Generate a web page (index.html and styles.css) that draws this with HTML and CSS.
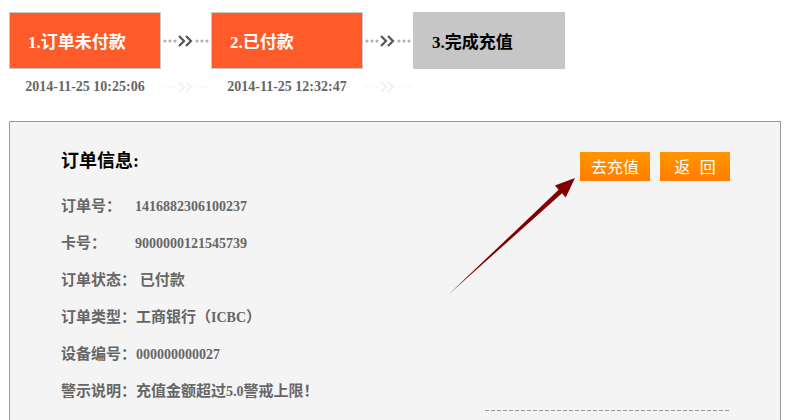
FILE: index.html
```html
<!DOCTYPE html>
<html lang="zh-CN">
<head>
    <meta charset="UTF-8">
    <title>订单详情</title>
    <link rel="stylesheet" href="styles.css">
</head>
<body>
    <div class="steps">
        <div class="step done">1.订单未付款</div>
        <div class="link">
            <svg width="50" height="20" viewBox="0 0 50 20">
                <circle cx="4" cy="10" r="1.6"/><circle cx="9" cy="10" r="1.6"/><circle cx="14" cy="10" r="1.6"/>
                <polyline points="18,5 23,10 18,15"/><polyline points="25,5 30,10 25,15"/>
                <circle cx="36" cy="10" r="1.6"/><circle cx="41" cy="10" r="1.6"/><circle cx="46" cy="10" r="1.6"/>
            </svg>
        </div>
        <div class="step done">2.已付款</div>
        <div class="link">
            <svg width="50" height="20" viewBox="0 0 50 20">
                <circle cx="4" cy="10" r="1.6"/><circle cx="9" cy="10" r="1.6"/><circle cx="14" cy="10" r="1.6"/>
                <polyline points="18,5 23,10 18,15"/><polyline points="25,5 30,10 25,15"/>
                <circle cx="36" cy="10" r="1.6"/><circle cx="41" cy="10" r="1.6"/><circle cx="46" cy="10" r="1.6"/>
            </svg>
        </div>
        <div class="step todo">3.完成充值</div>

        <div class="time">2014-11-25 10:25:06</div>
        <div class="link faded">
            <svg width="50" height="20" viewBox="0 0 50 20">
                <circle cx="4" cy="10" r="1.6"/><circle cx="9" cy="10" r="1.6"/><circle cx="14" cy="10" r="1.6"/>
                <polyline points="18,5 23,10 18,15"/><polyline points="25,5 30,10 25,15"/>
                <circle cx="36" cy="10" r="1.6"/><circle cx="41" cy="10" r="1.6"/><circle cx="46" cy="10" r="1.6"/>
            </svg>
        </div>
        <div class="time">2014-11-25 12:32:47</div>
        <div class="link faded">
            <svg width="50" height="20" viewBox="0 0 50 20">
                <circle cx="4" cy="10" r="1.6"/><circle cx="9" cy="10" r="1.6"/><circle cx="14" cy="10" r="1.6"/>
                <polyline points="18,5 23,10 18,15"/><polyline points="25,5 30,10 25,15"/>
                <circle cx="36" cy="10" r="1.6"/><circle cx="41" cy="10" r="1.6"/><circle cx="46" cy="10" r="1.6"/>
            </svg>
        </div>
        <div class="time"></div>
    </div>

    <div class="panel">
        <div class="panel-head">
            <h3>订单信息:</h3>
            <div class="actions">
                <a class="btn" href="#">去充值</a>
                <a class="btn back" href="#">返 回</a>
            </div>
        </div>

        <ul class="info">
            <li><span class="label">订单号：</span><span class="num">1416882306100237</span></li>
            <li><span class="label">卡号：</span><span class="num">9000000121545739</span></li>
            <li>订单状态： 已付款</li>
            <li>订单类型：工商银行（<span class="num">ICBC</span>）</li>
            <li>设备编号：<span class="num">000000000027</span></li>
            <li>警示说明：充值金额超过<span class="num">5.0</span>警戒上限！</li>
        </ul>

        <div class="dash"></div>

        <svg class="pointer" width="140" height="130" viewBox="0 0 140 130">
            <polygon points="2,123 116,21.3 119.7,25.4 129,6 108.9,13.6 112.6,17.7"/>
        </svg>
    </div>
</body>
</html>
```

FILE: styles.css
```css
body {
    margin: 0;
    padding: 12px 0 0 9px;
    background: #fff;
    font-family: "Liberation Serif", "Noto Sans CJK SC", serif;
    color: #666;
}

.steps {
    display: grid;
    grid-template-columns: 152px 50px 152px 50px 152px;
    grid-template-rows: 57px 20px;
    row-gap: 8px;
}
.step {
    box-sizing: border-box;
    padding-left: 18px;
    display: flex;
    align-items: center;
    font-size: 17px;
    font-weight: bold;
}
.step.done {
    background: #ff5a29;
    border: 1px solid #c9c9c9;
    color: #fff;
}
.step.todo {
    background: #c6c6c6;
    border: 1px solid #c6c6c6;
    color: #000;
}
.link {
    display: flex;
    align-items: center;
    justify-content: center;
}
.link svg circle {
    fill: #b0b0b0;
}
.link svg polyline {
    fill: none;
    stroke: #555;
    stroke-width: 2.2;
}
.link.faded svg {
    opacity: .07;
}
.time {
    text-align: center;
    font-size: 14px;
    font-weight: bold;
    line-height: 20px;
    color: #666;
}

.panel {
    position: relative;
    margin-top: 24px;
    width: 772px;
    height: 320px;
    border: 1px solid #999;
    background: #f4f4f4;
    padding: 0 50px 0 51px;
    box-sizing: border-box;
}
.panel-head {
    display: flex;
    justify-content: space-between;
    align-items: flex-start;
    padding-top: 27px;
}
.panel-head h3 {
    margin: 0;
    font-size: 18px;
    line-height: 24px;
    color: #000;
}
.actions {
    display: flex;
    gap: 10px;
    margin-top: 3px;
}
.btn {
    width: 70px;
    height: 29px;
    line-height: 29px;
    text-align: center;
    color: #fff;
    text-decoration: none;
    font-family: "Noto Sans CJK SC", sans-serif;
    font-size: 16px;
    background: linear-gradient(#ff9600, #ff7d00);
}
.btn.back {
    word-spacing: 6px;
}

.info {
    list-style: none;
    margin: 7px 0 0;
    padding: 0;
}
.info li {
    height: 37px;
    line-height: 37px;
    font-size: 15px;
    font-weight: bold;
    color: #666;
}
.info .label {
    display: inline-block;
    width: 74px;
}
.info .num {
    font-size: 14px;
}

.dash {
    margin: 0 0 0 424px;
    width: 244px;
    height: 1px;
    background: repeating-linear-gradient(90deg, #999 0 4px, transparent 4px 6px);
}

.pointer {
    position: absolute;
    left: 436px;
    top: 50px;
}
.pointer polygon {
    fill: #800000;
}
```
